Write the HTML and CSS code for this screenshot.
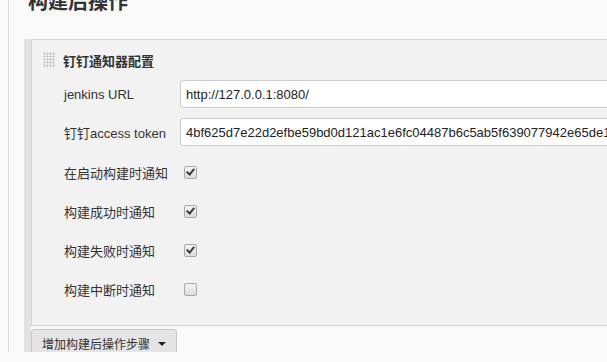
FILE: index.html
```html
<!DOCTYPE html>
<html lang="zh-CN">

<head>
    <meta charset="UTF-8">
    <meta name="viewport" content="width=device-width, initial-scale=1.0">
    <title>构建后操作</title>
    <link rel="stylesheet" href="styles.css">
</head>

<body>
    <div class="page">
        <h2 class="section-title">构建后操作</h2>

        <div class="section">
            <!-- Publisher config block -->
            <div class="panel">
                <div class="panel-header">
                    <span class="handle"></span>
                    <span class="panel-title">钉钉通知器配置</span>
                </div>

                <div class="form">
                    <div class="row">
                        <label class="label" for="jenkinsUrl">jenkins URL</label>
                        <input class="text-input" type="text" id="jenkinsUrl" value="http://127.0.0.1:8080/">
                    </div>
                    <div class="row">
                        <label class="label" for="accessToken">钉钉access token</label>
                        <input class="text-input" type="text" id="accessToken" value="4bf625d7e22d2efbe59bd0d121ac1e6fc04487b6c5ab5f639077942e65de1a8c3">
                    </div>

                    <div class="checks">
                        <div class="row check-row">
                            <span class="label">在启动构建时通知</span>
                            <span class="checkbox checked"></span>
                        </div>
                        <div class="row check-row">
                            <span class="label">构建成功时通知</span>
                            <span class="checkbox checked"></span>
                        </div>
                        <div class="row check-row">
                            <span class="label">构建失败时通知</span>
                            <span class="checkbox checked"></span>
                        </div>
                        <div class="row check-row">
                            <span class="label">构建中断时通知</span>
                            <span class="checkbox"></span>
                        </div>
                    </div>
                </div>
            </div>

            <button class="add-button">增加构建后操作步骤 <span class="caret"></span></button>
        </div>
    </div>
</body>

</html>
```

FILE: styles.css
```css
body {
    font-family: "Liberation Sans", Arial, "Noto Sans CJK SC", sans-serif;
    font-size: 13px;
    color: #333333;
    margin: 0;
    padding: 0;
    background-color: #fafafa;
    overflow: hidden;
}

.page {
    width: 900px;
    height: 362px;
    margin-left: 8px;
    border-left: 1px solid #dcdcdc;
    background-color: #f9f9f9;
}

.section-title {
    font-size: 20px;
    line-height: 24px;
    font-weight: bold;
    margin: -10px 0 25px 19px;
    color: #333333;
}

.section {
    margin-left: 15px;
    border-left: 7px solid #e2e2e2;
    padding-bottom: 2px;
}

.panel {
    background-color: #f2f2f2;
    border-top: 1px solid #d4d4d4;
    border-left: 1px solid #d4d4d4;
    border-bottom: 1px solid #d4d4d4;
    padding-bottom: 21px;
}

.panel-header {
    display: flex;
    align-items: center;
    height: 40px;
    padding-left: 11px;
}

.handle {
    width: 12px;
    height: 16px;
    background-image: radial-gradient(circle, #b8b8b8 0.9px, transparent 1.1px);
    background-size: 3px 3px;
}

.panel-title {
    font-weight: bold;
    margin-left: 8px;
}

.form {
    padding-left: 32px;
}

.row {
    display: flex;
    align-items: center;
    height: 28px;
    margin-bottom: 10px;
}

.label {
    width: 116px;
    flex-shrink: 0;
}

.text-input {
    flex: 1;
    height: 28px;
    box-sizing: border-box;
    border: 1px solid #cccccc;
    border-radius: 3px;
    padding: 0 5px;
    font-family: "Liberation Sans", Arial, sans-serif;
    font-size: 13px;
    color: #222222;
    background-color: #ffffff;
}

.checks {
    padding-top: 2px;
}

.check-row {
    height: 29px;
}

.check-row:last-child {
    margin-bottom: 0;
}

.checkbox {
    position: relative;
    width: 11px;
    height: 11px;
    margin-left: 4px;
    border: 1px solid #a8a8a8;
    border-radius: 2px;
    background: linear-gradient(#f4f4f4, #dcdcdc);
}

.checkbox.checked::after {
    content: "";
    position: absolute;
    left: 3px;
    top: 0px;
    width: 3px;
    height: 6px;
    border-right: 2px solid #3a3a3a;
    border-bottom: 2px solid #3a3a3a;
    transform: rotate(40deg);
}

.add-button {
    display: flex;
    align-items: center;
    height: 29px;
    margin-top: 3px;
    padding: 0 10px;
    background-color: #e4e4e4;
    border: 1px solid #c8c8c8;
    border-radius: 3px;
    font-family: "Liberation Sans", Arial, "Noto Sans CJK SC", sans-serif;
    font-size: 12px;
    color: #333333;
    cursor: pointer;
}

.caret {
    width: 0;
    height: 0;
    margin-left: 8px;
    border-left: 4px solid transparent;
    border-right: 4px solid transparent;
    border-top: 4px solid #222222;
}
```
